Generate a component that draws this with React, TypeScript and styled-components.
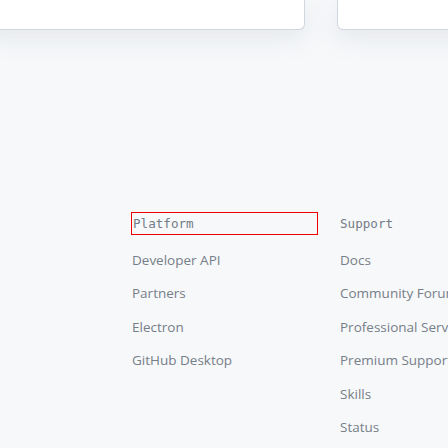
import styled, { createGlobalStyle } from "styled-components";

const GlobalStyle = createGlobalStyle`
  html, body {
    margin: 0;
    padding: 0;
    background: #f6f8fa;
    overflow: hidden;
  }
`;

const Page = styled.div`
  width: 448px;
  height: 448px;
  overflow: hidden;
  display: flex;
  flex-direction: column;
`;

const CardRow = styled.div`
  display: flex;
  gap: 32px;
  margin-left: -20px;
  height: 30px;
`;

const Card = styled.div<{ $width?: number }>`
  flex: ${(p) => (p.$width ? `0 0 ${p.$width}px` : "0 0 200px")};
  height: 30px;
  box-sizing: border-box;
  background: #ffffff;
  border: 1px solid #d0d7de;
  border-top: none;
  border-radius: 0 0 6px 6px;
  box-shadow: 0 8px 24px rgba(140, 149, 159, 0.16);
`;

const Columns = styled.div`
  display: grid;
  grid-template-columns: 185px 185px;
  column-gap: 23px;
  padding-left: 132px;
  margin-top: 183px;
`;

const Column = styled.div`
  display: flex;
  flex-direction: column;
`;

const Heading = styled.div<{ $focused?: boolean }>`
  box-sizing: border-box;
  height: 21px;
  line-height: 21px;
  padding-left: ${(p) => (p.$focused ? "1px" : "0")};
  font-family: "DejaVu Sans Mono", "Liberation Mono", monospace;
  font-size: 12.6px;
  color: #747c86;
  outline: ${(p) => (p.$focused ? "1px solid #ee0000" : "none")};
`;

const LinkList = styled.ul`
  list-style: none;
  margin: 15.5px 0 0;
  padding: 0;
  display: flex;
  flex-direction: column;
  gap: 12.5px;
`;

const LinkItem = styled.li`
  height: 21px;
  line-height: 21px;
  font-family: "Open Sans", "Noto Sans", sans-serif;
  font-size: 13.5px;
  color: #767e88;
  white-space: nowrap;
`;

const columns = [
  {
    title: "Platform",
    focused: true,
    links: ["Developer API", "Partners", "Electron", "GitHub Desktop"],
  },
  {
    title: "Support",
    focused: false,
    links: [
      "Docs",
      "Community Forum",
      "Professional Services",
      "Premium Support",
      "Skills",
      "Status",
    ],
  },
];

export default function App() {
  return (
    <Page>
      <GlobalStyle />
      <CardRow>
        <Card $width={325} />
        <Card $width={200} />
      </CardRow>
      <Columns>
        {columns.map((col) => (
          <Column key={col.title}>
            <Heading $focused={col.focused}>{col.title}</Heading>
            <LinkList>
              {col.links.map((link) => (
                <LinkItem key={link}>{link}</LinkItem>
              ))}
            </LinkList>
          </Column>
        ))}
      </Columns>
    </Page>
  );
}
